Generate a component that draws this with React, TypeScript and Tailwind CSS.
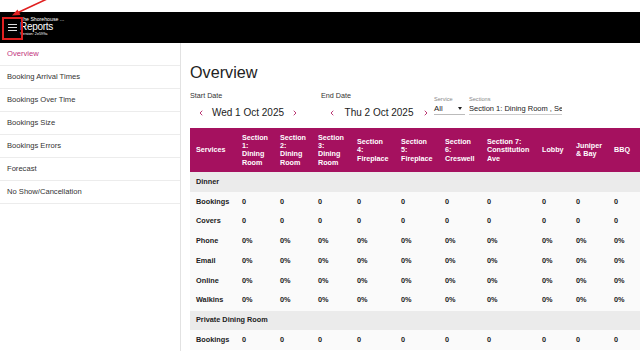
import React from "react";
import { ChevronLeft, ChevronRight } from "lucide-react";

const navItems = [
   "Overview",
   "Booking Arrival Times",
   "Bookings Over Time",
   "Bookings Size",
   "Bookings Errors",
   "Forecast",
   "No Show/Cancellation",
];

const columns: { label: string[]; width: number }[] = [
   { label: ["Services"], width: 46 },
   { label: ["Section", "1:", "Dining", "Room"], width: 38 },
   { label: ["Section", "2:", "Dining", "Room"], width: 38 },
   { label: ["Section", "3:", "Dining", "Room"], width: 39 },
   { label: ["Section", "4:", "Fireplace"], width: 44 },
   { label: ["Section", "5:", "Fireplace"], width: 44 },
   { label: ["Section", "6:", "Creswell"], width: 42 },
   { label: ["Section 7:", "Constitution", "Ave"], width: 55 },
   { label: ["Lobby"], width: 34 },
   { label: ["Juniper", "& Bay"], width: 38 },
   { label: ["BBQ"], width: 40 },
];

type Row = { kind: "group"; name: string } | { kind: "data"; name: string; value: string };

const rows: Row[] = [
   { kind: "group", name: "Dinner" },
   { kind: "data", name: "Bookings", value: "0" },
   { kind: "data", name: "Covers", value: "0" },
   { kind: "data", name: "Phone", value: "0%" },
   { kind: "data", name: "Email", value: "0%" },
   { kind: "data", name: "Online", value: "0%" },
   { kind: "data", name: "Walkins", value: "0%" },
   { kind: "group", name: "Private Dining Room" },
   { kind: "data", name: "Bookings", value: "0" },
];

function DatePicker({ label, value, width }: { label: string; value: string; width: string }) {
   return (
      <div className={`flex flex-col ${width}`}>
         <span className="text-[7.2px] leading-none text-[#333] mt-[12px]">{label}</span>
         <div className="flex items-center mt-[8px] pl-[7px] h-[12px]">
            <ChevronLeft className="w-[8px] h-[8px] text-[#b0185f]" strokeWidth={2.6} />
            <span className="w-[86px] text-center text-[10px] leading-none text-[#222]">{value}</span>
            <ChevronRight className="w-[8px] h-[8px] text-[#b0185f]" strokeWidth={2.6} />
         </div>
      </div>
   );
}

export default function App() {
   return (
      <div className="relative w-[640px] h-[351px] overflow-hidden bg-white font-['Liberation_Sans',Arial,sans-serif]">
         <div className="h-[12px]" />
         <header className="h-[31px] bg-black flex items-center">
            <div className="w-[20px] flex flex-col items-center gap-[1.5px] pl-[4px]">
               <span className="block w-[9px] h-[1.5px] bg-[#ddd]" />
               <span className="block w-[9px] h-[1.5px] bg-[#ddd]" />
               <span className="block w-[9px] h-[1.5px] bg-[#ddd]" />
            </div>
            <div className="flex flex-col text-white -mt-[3px]">
               <span className="text-[5.2px] leading-[6px]">The Shorehouse ...</span>
               <span className="text-[10px] leading-[10px] -tracking-[0.3px]">Reports</span>
               <span className="text-[3.8px] leading-[4px]">Version: 2e599a</span>
            </div>
         </header>
         <div className="flex h-[308px]">
            <nav className="w-[181px] shrink-0 border-r border-[#e2e2e2]">
               {navItems.map((item, i) => (
                  <div
                     key={item}
                     className={`h-[23px] border-b border-[#ececec] flex items-center pl-[7px] text-[7.6px] ${
                        i === 0 ? "text-[#c2337c]" : "text-[#333]"
                     }`}
                  >
                     {item}
                  </div>
               ))}
            </nav>
            <main className="flex-1 overflow-hidden pl-[9px]">
               <h1 className="mt-[21px] text-[16.2px] leading-none text-[#222]">Overview</h1>
               <div className="flex items-start">
                  <DatePicker label="Start Date" value="Wed 1 Oct 2025" width="w-[131px]" />
                  <DatePicker label="End Date" value="Thu 2 Oct 2025" width="w-[113px]" />
                  <div className="flex flex-col w-[31px] mt-[17px]">
                     <span className="text-[5.6px] leading-none text-[#888]">Service</span>
                     <div className="flex items-center justify-between h-[11px] border-b border-[#bbb] mt-[1px] pr-[3px]">
                        <span className="text-[7.8px] leading-none text-[#222]">All</span>
                        <span className="block w-0 h-0 border-l-[2px] border-r-[2px] border-t-[3px] border-l-transparent border-r-transparent border-t-[#222]" />
                     </div>
                  </div>
                  <div className="flex flex-col w-[93px] ml-[4px] mt-[17px]">
                     <span className="text-[5.6px] leading-none text-[#888]">Sections</span>
                     <div className="flex items-center h-[11px] border-b border-[#ccc] mt-[1px] overflow-hidden whitespace-nowrap">
                        <span className="text-[7.5px] leading-none text-[#222]">Section 1: Dining Room , Section 2: Dining Room</span>
                     </div>
                  </div>
               </div>
               <table className="table-fixed border-collapse mt-[9px] w-[458px]">
                  <colgroup>
                     {columns.map((c, i) => (
                        <col key={i} style={{ width: c.width }} />
                     ))}
                  </colgroup>
                  <thead>
                     <tr className="h-[44px] bg-[#a5115f]">
                        {columns.map((c, i) => (
                           <th key={i} className="text-left align-middle pl-[6px] p-0 font-bold text-white text-[7.2px] leading-[8.3px] whitespace-nowrap">
                              {c.label.map((l, j) => (
                                 <div key={j}>{l}</div>
                              ))}
                           </th>
                        ))}
                     </tr>
                  </thead>
                  <tbody>
                     {rows.map((r, i) =>
                        r.kind === "group" ? (
                           <tr key={i} className="h-[19.75px] bg-[#ebebeb]">
                              <td colSpan={columns.length} className="pl-[6px] p-0 font-bold text-[7.3px] text-[#222] whitespace-nowrap">
                                 {r.name}
                              </td>
                           </tr>
                        ) : (
                           <tr key={i} className="h-[19.75px] bg-[#fafafa]">
                              <td className="pl-[6px] p-0 font-bold text-[7.3px] text-[#222]">{r.name}</td>
                              {columns.slice(1).map((_, j) => (
                                 <td key={j} className="pl-[6px] p-0 font-bold text-[7.3px] text-[#222]">
                                    {r.value}
                                 </td>
                              ))}
                           </tr>
                        )
                     )}
                  </tbody>
               </table>
            </main>
         </div>
         {/* annotation: red box and arrow over the menu button */}
         <div className="absolute left-[2px] top-[17px] w-[21px] h-[23px] border-2 border-[#e02020]" />
         <svg className="absolute left-0 top-0" width="50" height="20" viewBox="0 0 50 20">
            <line x1="47" y1="-1" x2="18" y2="12.5" stroke="#e02020" strokeWidth="1.6" />
            <polygon points="12,15.5 17.5,9.5 20.5,15" fill="#e02020" />
         </svg>
      </div>
   );
}
